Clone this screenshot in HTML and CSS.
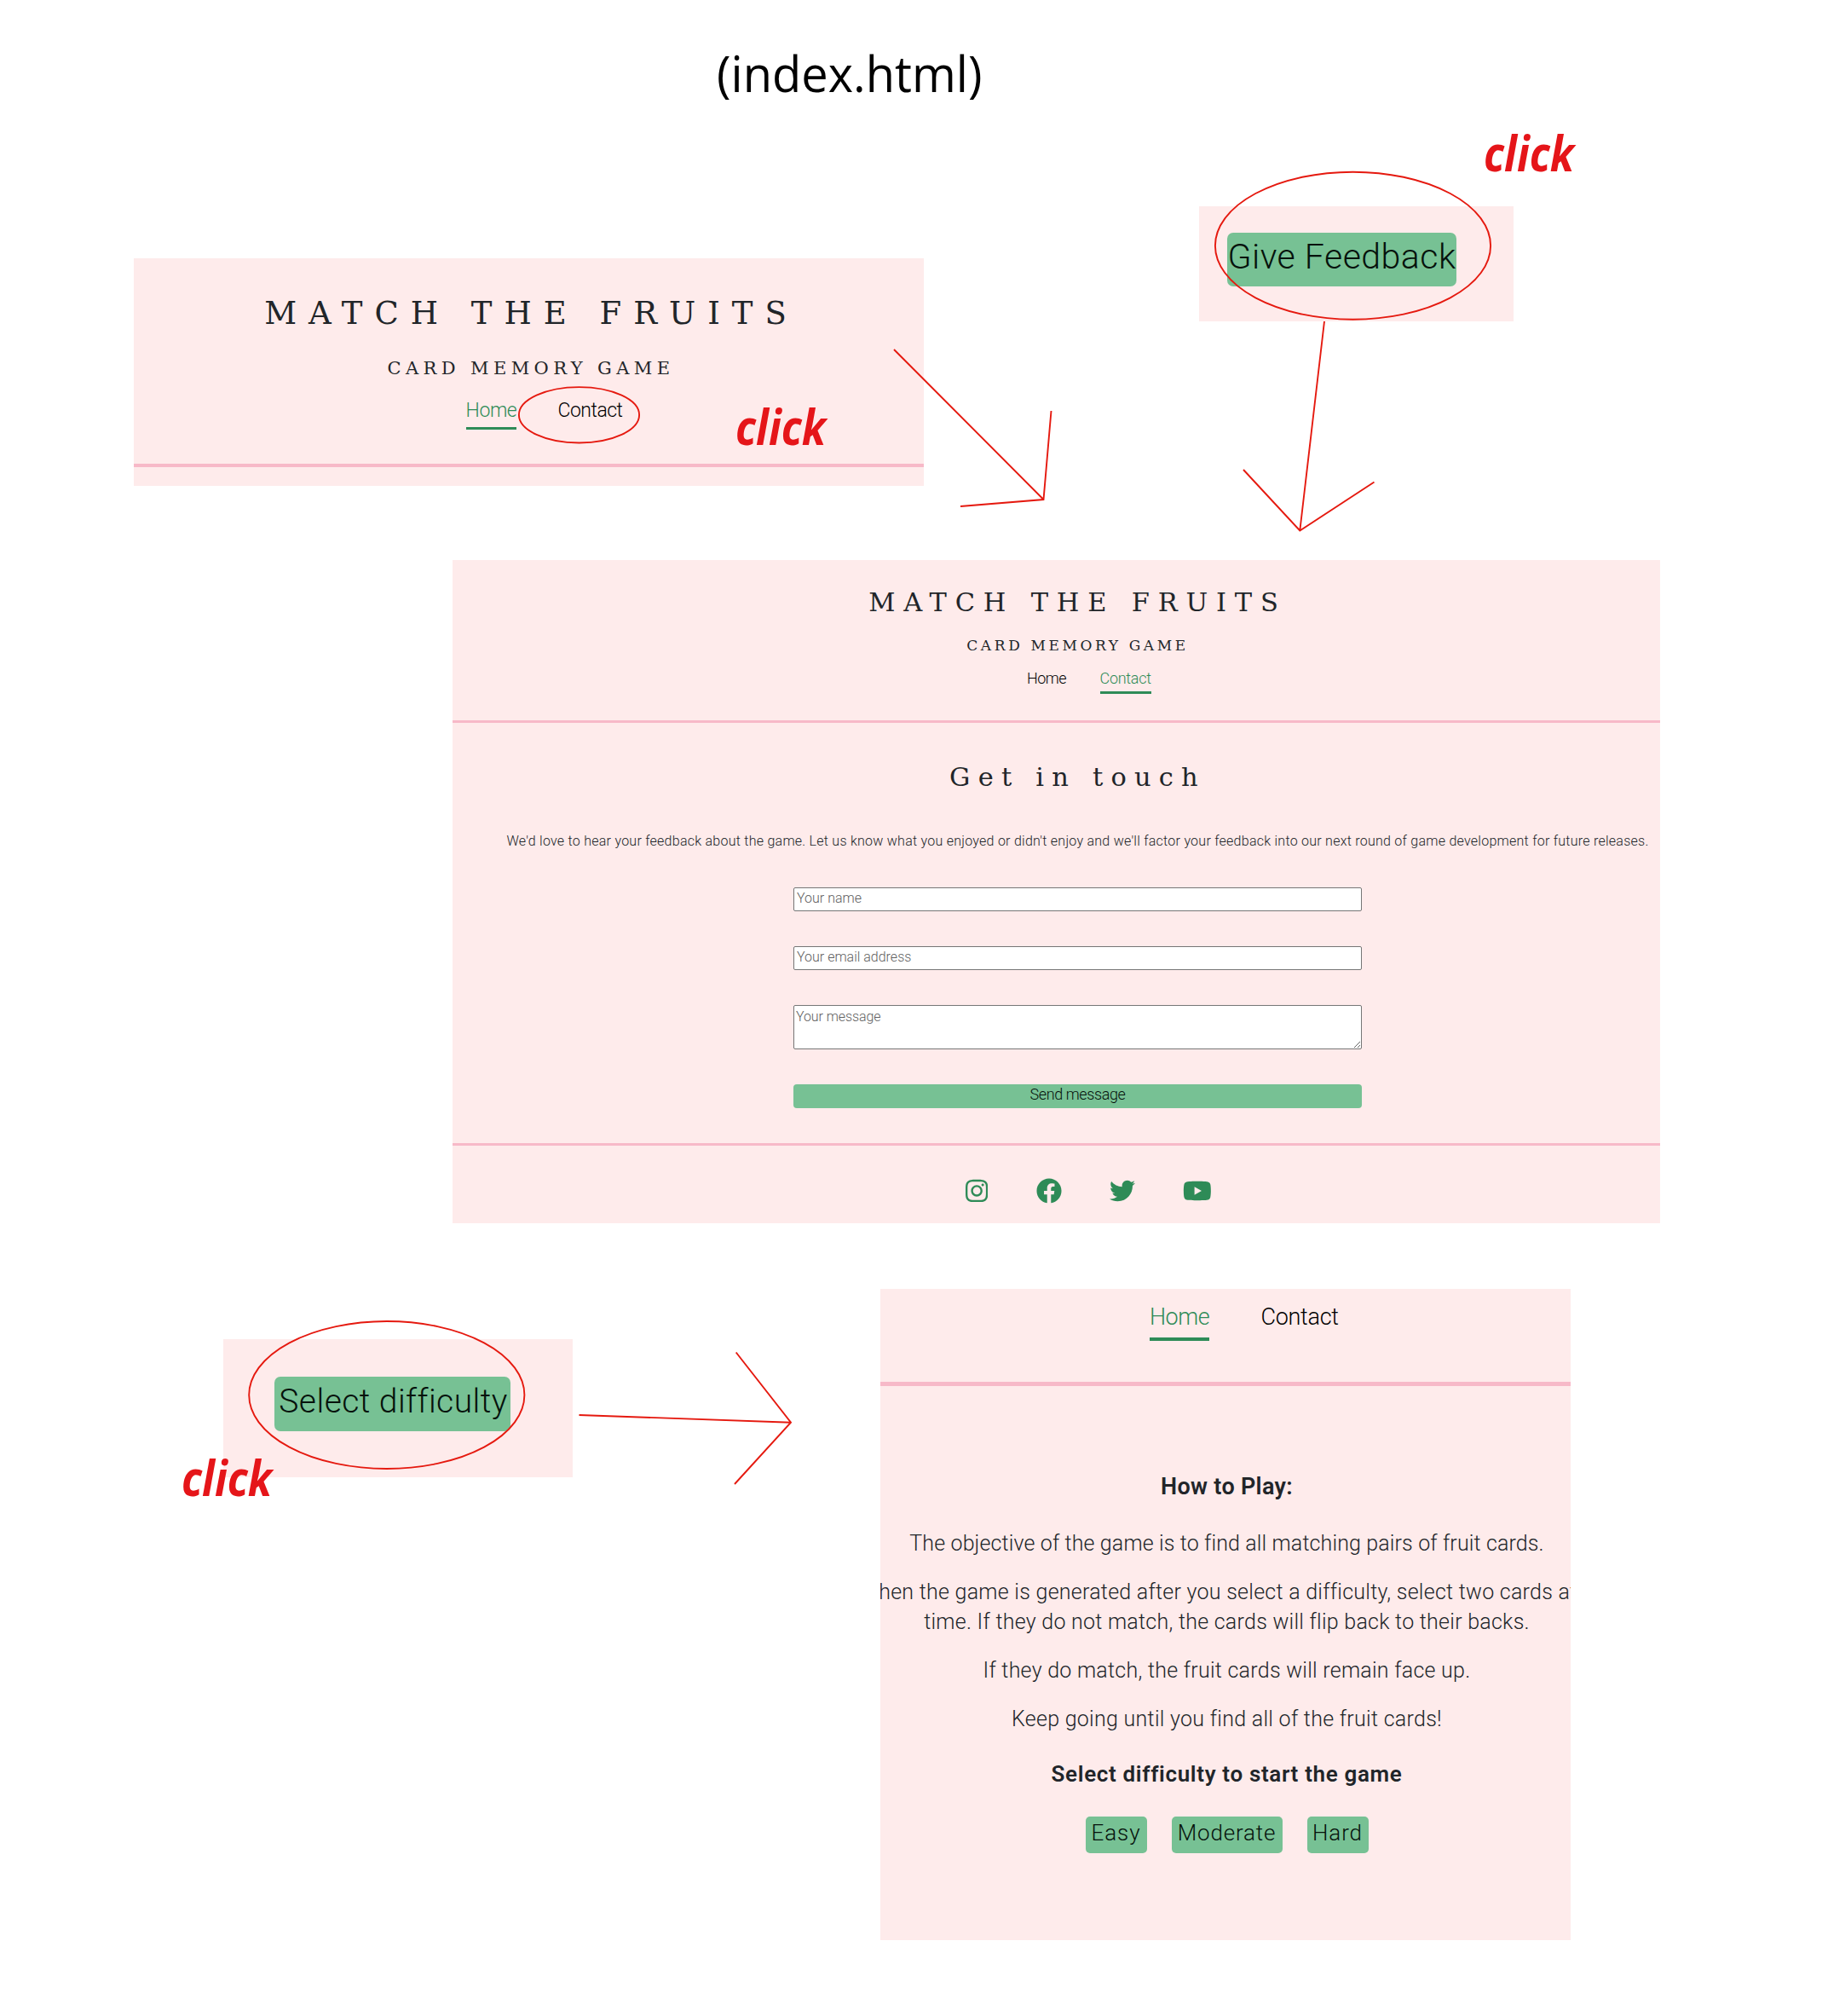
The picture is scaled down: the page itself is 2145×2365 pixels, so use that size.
FILE: index.html
```html
<!DOCTYPE html>
<html lang="en">
<head>
<meta charset="utf-8">
<title>(index.html)</title>
<link rel="stylesheet" href="styles.css">
</head>
<body>
<main class="canvas">
  <h1 class="board-title">(index.html)</h1>

  <section class="frame frame-header">
    <h2 class="brand">MATCH THE FRUITS</h2>
    <p class="tagline">CARD MEMORY GAME</p>
    <nav class="nav"><a class="link active">Home</a><a class="link">Contact</a></nav>
  </section>

  <section class="frame frame-feedback">
    <button class="btn btn-feedback">Give Feedback</button>
  </section>

  <section class="frame frame-contact">
    <header class="site-header">
      <h2 class="brand">MATCH THE FRUITS</h2>
      <p class="tagline">CARD MEMORY GAME</p>
      <nav class="nav"><a class="link">Home</a><a class="link active">Contact</a></nav>
    </header>
    <div class="contact-body">
      <h3 class="heading">Get in touch</h3>
      <p class="intro">We'd love to hear your feedback about the game. Let us know what you enjoyed or didn't enjoy and we'll factor your feedback into our next round of game development for future releases.</p>
      <form class="form">
        <input class="field field-name" type="text" placeholder="Your name">
        <input class="field" type="email" placeholder="Your email address">
        <textarea class="field field-message" placeholder="Your message"></textarea>
        <button class="btn btn-send" type="button">Send message</button>
      </form>
    </div>
    <footer class="social">
      <svg class="icon" viewBox="0 0 448 512"><path d="M224.1 141c-63.6 0-114.9 51.3-114.9 114.9s51.3 114.9 114.9 114.9S339 319.5 339 255.9 287.7 141 224.1 141zm0 189.6c-41.1 0-74.7-33.5-74.7-74.7s33.5-74.7 74.7-74.7 74.7 33.5 74.7 74.7-33.6 74.7-74.7 74.7zm146.4-194.3c0 14.9-12 26.8-26.8 26.8-14.9 0-26.8-12-26.8-26.8s12-26.8 26.8-26.8 26.8 12 26.8 26.8zm76.1 27.2c-1.7-35.9-9.9-67.7-36.2-93.9-26.2-26.2-58-34.4-93.9-36.2-37-2.1-147.9-2.1-184.9 0-35.8 1.7-67.6 9.9-93.9 36.1s-34.4 58-36.2 93.9c-2.1 37-2.1 147.9 0 184.9 1.7 35.9 9.9 67.7 36.2 93.9s58 34.4 93.9 36.2c37 2.1 147.9 2.1 184.9 0 35.9-1.7 67.7-9.9 93.9-36.2 26.2-26.2 34.4-58 36.2-93.9 2.1-37 2.1-147.8 0-184.8zM398.8 388c-7.8 19.6-22.9 34.7-42.6 42.6-29.5 11.7-99.5 9-132.1 9s-102.7 2.6-132.1-9c-19.6-7.8-34.7-22.9-42.6-42.6-11.7-29.5-9-99.5-9-132.1s-2.6-102.7 9-132.1c7.8-19.6 22.9-34.7 42.6-42.6 29.5-11.7 99.5-9 132.1-9s102.7-2.6 132.1 9c19.6 7.8 34.7 22.9 42.6 42.6 11.7 29.5 9 99.5 9 132.1s2.7 102.7-9 132.1z"/></svg>
      <svg class="icon" viewBox="0 0 512 512"><path d="M504 256C504 119 393 8 256 8S8 119 8 256c0 123.78 90.69 226.38 209.25 245V327.69h-63V256h63v-54.64c0-62.15 37-96.48 93.67-96.48 27.14 0 55.52 4.84 55.52 4.84v61h-31.28c-30.8 0-40.41 19.12-40.41 38.73V256h68.78l-11 71.69h-57.78V501C413.31 482.38 504 379.78 504 256z"/></svg>
      <svg class="icon" viewBox="0 0 512 512"><path d="M459.37 151.716c.325 4.548.325 9.097.325 13.645 0 138.72-105.583 298.558-298.558 298.558-59.452 0-114.68-17.219-161.137-47.106 8.447.974 16.568 1.299 25.34 1.299 49.055 0 94.213-16.568 130.274-44.832-46.132-.975-84.792-31.188-98.112-72.772 6.498.974 12.995 1.624 19.818 1.624 9.421 0 18.843-1.3 27.614-3.573-48.081-9.747-84.143-51.98-84.143-102.985v-1.299c13.969 7.797 30.214 12.67 47.431 13.319-28.264-18.843-46.781-51.005-46.781-87.391 0-19.492 5.197-37.36 14.294-52.954 51.655 63.675 129.3 105.258 216.365 109.807-1.624-7.797-2.599-15.918-2.599-24.04 0-57.828 46.782-104.934 104.934-104.934 30.213 0 57.502 12.67 76.67 33.137 23.715-4.548 46.456-13.32 66.599-25.34-7.798 24.366-24.366 44.833-46.132 57.827 21.117-2.273 41.584-8.122 60.426-16.243-14.292 20.791-32.161 39.308-52.628 54.253z"/></svg>
      <svg class="icon" viewBox="0 0 576 512"><path d="M549.655 124.083c-6.281-23.65-24.787-42.276-48.284-48.597C458.781 64 288 64 288 64S117.22 64 74.629 75.486c-23.497 6.322-42.003 24.947-48.284 48.597-11.412 42.867-11.412 132.305-11.412 132.305s0 89.438 11.412 132.305c6.281 23.65 24.787 41.5 48.284 47.821C117.22 448 288 448 288 448s170.78 0 213.371-11.486c23.497-6.321 42.003-24.171 48.284-47.821 11.412-42.867 11.412-132.305 11.412-132.305s0-89.438-11.412-132.305zm-317.51 213.508V175.185l142.739 81.205-142.739 81.201z"/></svg>
    </footer>
  </section>

  <section class="frame frame-difficulty">
    <button class="btn btn-difficulty">Select difficulty</button>
  </section>

  <section class="frame frame-game">
    <nav class="nav"><a class="link active">Home</a><a class="link">Contact</a></nav>
    <div class="game-body">
      <h3 class="game-title">How to Play:</h3>
      <p class="rule rule-1">The objective of the game is to find all matching pairs of fruit cards.</p>
      <p class="rule rule-2">When the game is generated after you select a difficulty, select two cards at a</p>
      <p class="rule rule-2b">time. If they do not match, the cards will flip back to their backs.</p>
      <p class="rule rule-3">If they do match, the fruit cards will remain face up.</p>
      <p class="rule rule-4">Keep going until you find all of the fruit cards!</p>
      <h3 class="game-subtitle">Select difficulty to start the game</h3>
      <div class="levels">
        <button class="btn level">Easy</button>
        <button class="btn level level-wide">Moderate</button>
        <button class="btn level">Hard</button>
      </div>
    </div>
  </section>

  <svg class="marks" viewBox="0 0 2145 2365">
    <ellipse cx="679.5" cy="486.8" rx="70.6" ry="32.7"/>
    <ellipse cx="1587.5" cy="288.2" rx="161.6" ry="86.5"/>
    <ellipse cx="453.8" cy="1636.5" rx="161.6" ry="86.5"/>
    <path d="M1049 410 1224.5 586M1233.5 482 1224.5 586 1127 594"/>
    <path d="M1554 377 1525.3 622.5M1459 551 1525.3 622.5 1612.5 565.5"/>
    <path d="M679.5 1660 928 1668.7M863.7 1586.5 928 1668.7 862 1741"/>
  </svg>
  <span class="note note-1">click</span>
  <span class="note note-2">click</span>
  <span class="note note-3">click</span>
</main>
</body>
</html>
```
FILE: styles.css
```css
* { box-sizing: border-box; }

body {
  margin: 0;
  background: #fff;
  color: #212529;
  font-family: Roboto, "Liberation Sans", sans-serif;
  font-weight: 300;
}

h1, h2, h3, p { margin: 0; font-weight: inherit; }

.canvas {
  position: relative;
  width: 2145px;
  height: 2365px;
  overflow: hidden;
}

/* Board annotations */
.board-title {
  position: absolute;
  left: 840.8px;
  top: 45px;
  font: 400 59px/80px "Open Sans", sans-serif;
  color: #000;
  transform: scaleX(.949);
  transform-origin: 0 0;
}

.note {
  position: absolute;
  font: italic 700 58px/70px "Open Sans", sans-serif;
  color: #e51519;
  transform: scaleX(.86);
  transform-origin: 0 0;
}
.note-1 { left: 863.3px; top: 464.5px; }
.note-2 { left: 1740.5px; top: 144px; }
.note-3 { left: 212.8px; top: 1697.5px; }

.marks {
  position: absolute;
  inset: 0;
  width: 2145px;
  height: 2365px;
  fill: none;
  stroke: #e5190f;
  stroke-width: 1.9;
}

/* Frames placed on the board */
.frame {
  position: absolute;
  background: #feebeb;
  overflow: hidden;
}
.frame-header { left: 157px; top: 303px; width: 927px; height: 267px; padding-top: 43px; }
.frame-feedback { left: 1407px; top: 242px; width: 369px; height: 135px; padding: 31px 0 0 33px; }
.frame-contact { left: 531px; top: 657px; width: 1417px; height: 778px; }
.frame-difficulty { left: 262px; top: 1571px; width: 410px; height: 162px; padding: 44px 0 0 60px; }
.frame-game { left: 1033px; top: 1512px; width: 810px; height: 764px; }

/* Shared pieces */
.brand, .tagline, .heading {
  font-family: "DejaVu Serif", serif;
  font-weight: 400;
  text-align: center;
  white-space: nowrap;
}

.nav { display: flex; border-bottom: 4px solid #f7b9c8; }
.link { color: #000; font-weight: 350; border-bottom: 3px solid transparent; white-space: nowrap; }
.link.active { color: #2e8b57; border-bottom-color: #2e8b57; font-weight: 300; }

.btn {
  display: block;
  border: 0;
  background: #77c194;
  color: #06120c;
  font-family: inherit;
  font-weight: 300;
  text-align: center;
  white-space: nowrap;
}

/* Header frame */
.frame-header .brand { font-size: 37px; line-height: 44px; letter-spacing: 14px; word-spacing: -1px; padding-left: 6px; }
.frame-header .tagline { font-size: 21px; line-height: 24px; letter-spacing: 5.4px; padding-left: 5px; margin-top: 30px; }
.frame-header .nav { gap: 49px; padding: 23.6px 0 40px 389.5px; }
.frame-header .link { font-size: 23px; line-height: 28px; padding-bottom: 5.4px; letter-spacing: -.5px; }
.frame-header .active { width: 59px; letter-spacing: -.4px; }

/* Feedback and difficulty frames */
.btn-feedback { width: 269px; height: 63px; padding: 0 0 7.5px; border-radius: 7px; font-size: 41px; letter-spacing: .5px; }
.btn-difficulty { width: 277px; height: 64px; padding: 0 0 7px 2px; border-radius: 7px; font-size: 39px; letter-spacing: .45px; }

/* Contact page */
.site-header { padding-top: 32px; }
.site-header .brand { font-size: 30.5px; line-height: 36px; letter-spacing: 9.8px; padding-left: 50px; }
.site-header .tagline { font-size: 17px; line-height: 20px; letter-spacing: 3.6px; padding-left: 50px; margin-top: 22px; }
.site-header .nav { gap: 38.5px; padding: 18.1px 0 31px 674px; border-bottom-width: 3px; }
.site-header .link { font-size: 18px; line-height: 22px; padding-bottom: 3.9px; letter-spacing: -.5px; width: 47px; }
.site-header .active { letter-spacing: -.28px; width: 60px; }

.contact-body { padding: 45.6px 0 41px 50px; border-bottom: 3px solid #f7b9c8; }
.heading { font-size: 30.5px; line-height: 36px; letter-spacing: 9.2px; }
.intro { margin-top: 45.9px; font-size: 16px; line-height: 24px; letter-spacing: .255px; text-align: center; white-space: nowrap; }

.form { width: 667px; margin: 41.5px auto 0; display: flex; flex-direction: column; gap: 41px; }
.field {
  display: block;
  width: 100%;
  height: 28px;
  margin: 0;
  padding: 0 3px 3px;
  border: 1px solid #767676;
  border-radius: 2px;
  background: #fff;
  font: 300 16px/20px Roboto, sans-serif;
  outline: 0;
}
.field::placeholder { color: #606060; opacity: 1; }
.field-message { height: 52px; padding: 3px 2px 2px; letter-spacing: -.1px; }
.btn-send { height: 28px; padding: 0 0 4px; border-radius: 4px; font-size: 18px; font-weight: 350; letter-spacing: -.4px; }

.social { display: flex; gap: 56.4px; padding: 38.2px 0 0 602px; }
.icon { height: 30px; fill: #2e8b57; }

/* Game page */
.frame-game .nav { gap: 60.5px; padding: 16.8px 0 48px 316px; border-bottom-width: 5px; }
.frame-game .link { font-size: 27px; line-height: 32px; padding-bottom: 8.2px; border-bottom-width: 4px; letter-spacing: -.3px; }
.frame-game .active { width: 70px; letter-spacing: -.5px; }

.game-body { display: flex; flex-direction: column; align-items: center; padding: 99.8px 0 0 3px; white-space: nowrap; }
.game-title { font-size: 27px; line-height: 36px; font-weight: 600; letter-spacing: .3px; }
.rule { font-size: 25px; line-height: 35.8px; letter-spacing: .26px; margin-top: 21.2px; }
.rule-1 { letter-spacing: .13px; margin-top: 30.9px; }
.rule-2b { margin-top: -.6px; }
.rule-4 { letter-spacing: .28px; }
.game-subtitle { font-size: 26px; line-height: 36px; font-weight: 600; letter-spacing: .66px; margin-top: 28.5px; }
.levels { display: flex; gap: 29px; margin-top: 31.9px; }
.level { width: 72px; height: 43px; padding: 0 0 5.5px; border-radius: 5px; font-size: 26px; letter-spacing: .9px; }
.level-wide { width: 130px; letter-spacing: .8px; }
```
